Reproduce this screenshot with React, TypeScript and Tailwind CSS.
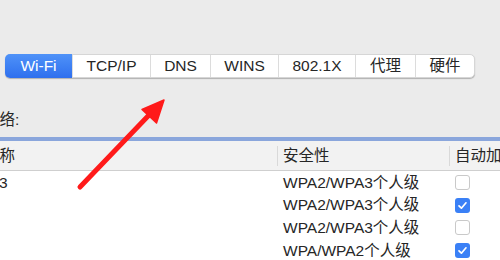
const tabs = [
  { label: "Wi-Fi", w: "w-[67px]" },
  { label: "TCP/IP", w: "w-[78px]" },
  { label: "DNS", w: "w-[60px]" },
  { label: "WINS", w: "w-[68px]" },
  { label: "802.1X", w: "w-[77px]" },
  { label: "代理", w: "w-[60px]" },
  { label: "硬件", w: "w-[59px]" },
];

const rows = [
  { name: "3", sec: "WPA2/WPA3个人级", auto: false },
  { name: "", sec: "WPA2/WPA3个人级", auto: true },
  { name: "", sec: "WPA2/WPA3个人级", auto: false },
  { name: "", sec: "WPA/WPA2个人级", auto: true },
];

const Check = ({ on }: { on: boolean }) =>
  on ? (
    <div className="w-[15px] h-[15px] shrink-0 rounded-[3px] bg-[#3a80f6] flex items-center justify-center">
      <svg width="11" height="11" viewBox="0 0 11 11">
        <path d="M2 5.8 L4.4 8.2 L9 2.8" fill="none" stroke="#fff" strokeWidth="1.7" strokeLinecap="round" strokeLinejoin="round" />
      </svg>
    </div>
  ) : (
    <div className="w-[15px] h-[15px] shrink-0 rounded-[3px] bg-white border border-[#c9c9c9]" />
  );

const App = () => {
  return (
    <div
      className="relative w-[500px] h-[260px] overflow-hidden bg-[#ebebeb] text-[#262626] text-[15.5px]"
      style={{ fontFamily: '"Liberation Sans", "Noto Sans CJK SC", sans-serif' }}
    >
      <div className="pt-[54px] pl-[5px]">
        <div className="flex h-[24px] w-fit rounded-[5px] bg-white shadow-[0_1px_1px_rgba(0,0,0,0.25)] border border-[#d6d6d6]">
          {tabs.map((t, i) => (
            <div
              key={t.label}
              className={
                i === 0
                  ? `${t.w} -my-px -ml-px flex items-center justify-center rounded-l-[5px] bg-gradient-to-b from-[#4f92f8] to-[#2f6fee] text-white`
                  : `${t.w} flex items-center justify-center border-l border-[#dcdcdc]`
              }
            >
              {t.label}
            </div>
          ))}
        </div>
      </div>

      <div className="mt-[31px] h-[22px] flex items-center whitespace-nowrap">
        <div className="-ml-[16px]">网络:</div>
      </div>

      <div className="mt-[6px] border-t-[4px] border-[#8aa6dc]">
        <div className="flex h-[30px] items-center bg-[#f2f2f2] border-b border-[#cfcfcf]">
          <div className="w-[277px] shrink-0 whitespace-nowrap">
            <div className="-ml-[16px]">名称</div>
          </div>
          <div className="w-[172px] shrink-0 h-[20px] border-l border-[#d9d9d9] pl-[5px] flex items-center whitespace-nowrap">安全性</div>
          <div className="shrink-0 h-[20px] border-l border-[#d9d9d9] pl-[5px] flex items-center whitespace-nowrap">自动加入</div>
        </div>
        <div className="bg-white">
          {rows.map((r, i) => (
            <div key={i} className="flex h-[22.7px] items-center">
              <div className="w-[277px] shrink-0 whitespace-nowrap">
                <div className="-ml-[1px]">{r.name}</div>
              </div>
              <div className="w-[178px] shrink-0 pl-[6px] whitespace-nowrap">{r.sec}</div>
              <Check on={r.auto} />
            </div>
          ))}
        </div>
      </div>

      <svg className="absolute left-0 top-0" width="500" height="260">
        <line x1="80" y1="187" x2="150" y2="114" stroke="#ff1a1a" strokeWidth="5" strokeLinecap="round" />
        <polygon points="164,100 156.5,123 142,109.5" fill="#ff1a1a" stroke="#ff1a1a" strokeWidth="1.5" strokeLinejoin="round" />
      </svg>
    </div>
  );
};

export default App;
